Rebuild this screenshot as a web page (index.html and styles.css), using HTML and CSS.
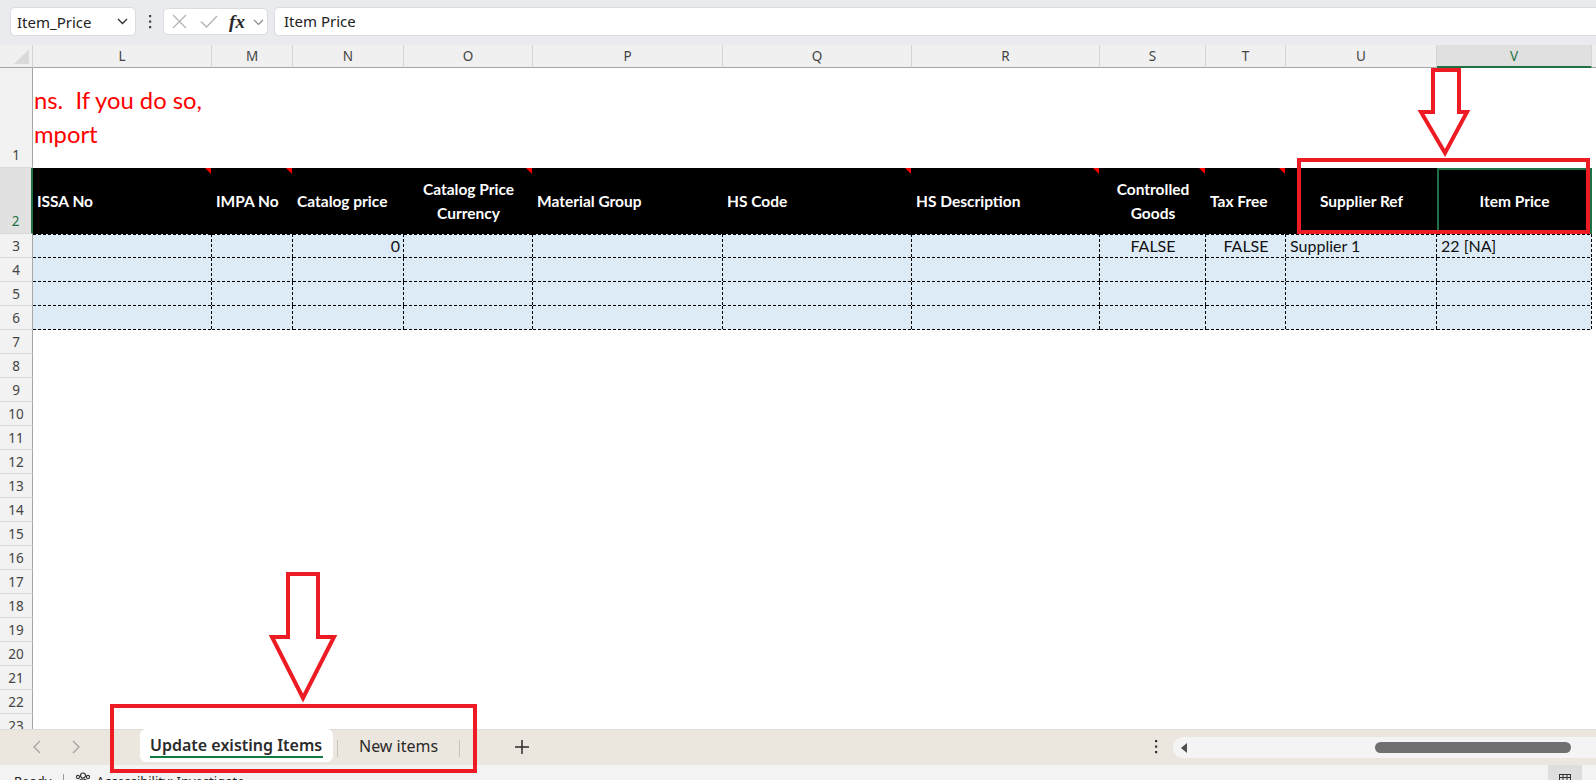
FILE: index.html
```html
<!DOCTYPE html>
<html lang="en">

<head>
  <meta charset="UTF-8" />
  <meta name="viewport" content="width=device-width, initial-scale=1.0" />
  <title>Item import - Update existing Items</title>
  <link rel="stylesheet" href="styles.css">
</head>

<body>
  <div class="formula-bar">
    <div class="name-box">
      <span>Item_Price</span>
      <svg width="11" height="7" viewBox="0 0 11 7"><polyline points="1,1 5.5,5.5 10,1" fill="none" stroke="#303030" stroke-width="1.3" /></svg>
    </div>
    <div class="bar-dots">
      <svg width="4" height="14" viewBox="0 0 4 14"><rect x="1" y="0" width="2.2" height="2.2" /><rect x="1" y="5.5" width="2.2" height="2.2" /><rect x="1" y="11" width="2.2" height="2.2" /></svg>
    </div>
    <div class="fx-group">
      <span class="fx-btn">
        <svg width="15" height="15" viewBox="0 0 15 15"><path d="M1 1L14 14M14 1L1 14" stroke="#b4b4b4" stroke-width="1.3" /></svg>
      </span>
      <span class="fx-btn">
        <svg width="18" height="13" viewBox="0 0 18 13"><polyline points="1,6.5 6.5,12 17,1" fill="none" stroke="#b4b4b4" stroke-width="1.3" /></svg>
      </span>
      <span class="fx-label">fx</span>
      <span class="fx-caret">
        <svg width="11" height="7" viewBox="0 0 11 7"><polyline points="1,1 5.5,5.5 10,1" fill="none" stroke="#8a8a8a" stroke-width="1.2" /></svg>
      </span>
    </div>
    <div class="formula-input">Item Price</div>
  </div>

  <div class="sheet">
    <!-- column letters -->
    <div class="corner"></div>
    <div class="col-head">L</div>
    <div class="col-head">M</div>
    <div class="col-head">N</div>
    <div class="col-head">O</div>
    <div class="col-head">P</div>
    <div class="col-head">Q</div>
    <div class="col-head">R</div>
    <div class="col-head">S</div>
    <div class="col-head">T</div>
    <div class="col-head">U</div>
    <div class="col-head selected">V</div>
    <div class="col-head rest"></div>

    <!-- row 1: instructions (overflowing from earlier columns) -->
    <div class="row-head tall">1</div>
    <div class="wide-cell">
      <div class="warning">ns.  If you do so,<br>mport</div>
    </div>

    <!-- row 2: column titles -->
    <div class="row-head active">2</div>
    <div class="hcell noted">ISSA No</div>
    <div class="hcell noted">IMPA No</div>
    <div class="hcell">Catalog price</div>
    <div class="hcell centered noted">Catalog Price<br>Currency</div>
    <div class="hcell">Material Group</div>
    <div class="hcell noted">HS Code</div>
    <div class="hcell noted">HS Description</div>
    <div class="hcell centered noted">Controlled<br>Goods</div>
    <div class="hcell noted">Tax Free</div>
    <div class="hcell centered">Supplier Ref</div>
    <div class="hcell centered current">Item Price</div>
    <div class="blank"></div>

    <!-- rows 3-6: data -->
    <div class="row-head">3</div>
    <div class="dcell first"></div>
    <div class="dcell first"></div>
    <div class="dcell first right">0</div>
    <div class="dcell first"></div>
    <div class="dcell first"></div>
    <div class="dcell first"></div>
    <div class="dcell first"></div>
    <div class="dcell first centered">FALSE</div>
    <div class="dcell first centered">FALSE</div>
    <div class="dcell first">Supplier 1</div>
    <div class="dcell first">22 [NA]</div>
    <div class="blank"></div>

    <div class="row-head">4</div>
    <div class="dcell"></div>
    <div class="dcell"></div>
    <div class="dcell"></div>
    <div class="dcell"></div>
    <div class="dcell"></div>
    <div class="dcell"></div>
    <div class="dcell"></div>
    <div class="dcell"></div>
    <div class="dcell"></div>
    <div class="dcell"></div>
    <div class="dcell"></div>
    <div class="blank"></div>

    <div class="row-head">5</div>
    <div class="dcell"></div>
    <div class="dcell"></div>
    <div class="dcell"></div>
    <div class="dcell"></div>
    <div class="dcell"></div>
    <div class="dcell"></div>
    <div class="dcell"></div>
    <div class="dcell"></div>
    <div class="dcell"></div>
    <div class="dcell"></div>
    <div class="dcell"></div>
    <div class="blank"></div>

    <div class="row-head">6</div>
    <div class="dcell"></div>
    <div class="dcell"></div>
    <div class="dcell"></div>
    <div class="dcell"></div>
    <div class="dcell"></div>
    <div class="dcell"></div>
    <div class="dcell"></div>
    <div class="dcell"></div>
    <div class="dcell"></div>
    <div class="dcell"></div>
    <div class="dcell"></div>
    <div class="blank"></div>

    <!-- empty rows -->
    <div class="row-head">7</div><div class="wide-cell"></div>
    <div class="row-head">8</div><div class="wide-cell"></div>
    <div class="row-head">9</div><div class="wide-cell"></div>
    <div class="row-head">10</div><div class="wide-cell"></div>
    <div class="row-head">11</div><div class="wide-cell"></div>
    <div class="row-head">12</div><div class="wide-cell"></div>
    <div class="row-head">13</div><div class="wide-cell"></div>
    <div class="row-head">14</div><div class="wide-cell"></div>
    <div class="row-head">15</div><div class="wide-cell"></div>
    <div class="row-head">16</div><div class="wide-cell"></div>
    <div class="row-head">17</div><div class="wide-cell"></div>
    <div class="row-head">18</div><div class="wide-cell"></div>
    <div class="row-head">19</div><div class="wide-cell"></div>
    <div class="row-head">20</div><div class="wide-cell"></div>
    <div class="row-head">21</div><div class="wide-cell"></div>
    <div class="row-head">22</div><div class="wide-cell"></div>
    <div class="row-head">23</div><div class="wide-cell"></div>
  </div>

  <div class="tab-bar">
    <div class="tab-nav">
      <span class="nav-btn">
        <svg width="8" height="14" viewBox="0 0 8 14"><polyline points="7,1 1,7 7,13" fill="none" stroke="#a3a3a3" stroke-width="1.3" /></svg>
      </span>
      <span class="nav-btn">
        <svg width="8" height="14" viewBox="0 0 8 14"><polyline points="1,1 7,7 1,13" fill="none" stroke="#a3a3a3" stroke-width="1.3" /></svg>
      </span>
    </div>
    <div class="tabs">
      <div class="tab active">Update existing Items</div>
      <span class="tab-sep"></span>
      <div class="tab">New items</div>
      <span class="tab-sep"></span>
    </div>
    <div class="tab-add">
      <svg width="16" height="16" viewBox="0 0 16 16"><path d="M8 1V15M1 8H15" stroke="#2b2b2b" stroke-width="1.5" /></svg>
    </div>
    <div class="tab-dots">
      <svg width="4" height="14" viewBox="0 0 4 14"><rect x="1" y="0" width="2.2" height="2.2" /><rect x="1" y="5.5" width="2.2" height="2.2" /><rect x="1" y="11" width="2.2" height="2.2" /></svg>
    </div>
    <div class="hscroll">
      <svg width="7" height="10" viewBox="0 0 7 10"><polygon points="6,0 6,10 0,5" fill="#505050" /></svg>
      <div class="thumb"></div>
    </div>
  </div>

  <div class="status-bar">
    <span class="status-text">Ready</span>
    <span class="status-sep"></span>
    <span class="status-item">
      <svg width="16" height="14" viewBox="0 0 16 14"><circle cx="8" cy="3.5" r="2.5" fill="none" stroke="#333" stroke-width="1.2" /><circle cx="3" cy="5" r="1.6" fill="none" stroke="#333" stroke-width="1.1" /><circle cx="13" cy="5" r="1.6" fill="none" stroke="#333" stroke-width="1.1" /><path d="M3 13C3 9 5 7 8 7S13 9 13 13" fill="none" stroke="#333" stroke-width="1.2" /></svg>
      Accessibility: Investigate
    </span>
    <span class="view-btn">
      <svg width="12" height="10" viewBox="0 0 12 10"><rect x="0.5" y="0.5" width="11" height="9" fill="none" stroke="#333" /><path d="M4 0V10M8 0V10M0 3.5H12" stroke="#333" /></svg>
    </span>
  </div>

  <!-- red markup drawn on top of the screenshot -->
  <svg class="marks" width="1596" height="780" viewBox="0 0 1596 780">
    <g fill="none" stroke="#ed1c24" stroke-width="4">
      <rect x="1299" y="160" width="289" height="72" />
      <path d="M1433 70H1459V112H1467L1445 153L1421 112H1433Z" />
      <rect x="112" y="706" width="363" height="65" />
      <path d="M288 574H318V637H334L303 698L272 637H288Z" />
    </g>
  </svg>
</body>

</html>
```

FILE: styles.css
```css
* {
  box-sizing: border-box;
}

html,
body {
  margin: 0;
  height: 100%;
}

body {
  position: relative;
  width: 1596px;
  height: 780px;
  overflow: hidden;
  background: #fff;
  color: #242424;
  font-family: "Noto Sans", "Open Sans", sans-serif;
}

/* ---------- formula bar ---------- */

.formula-bar {
  display: flex;
  align-items: flex-start;
  height: 45px;
  padding: 7px 0 0 10px;
  background: #e9ebee;
}

.name-box {
  display: flex;
  align-items: center;
  justify-content: space-between;
  width: 126px;
  height: 29px;
  padding: 0 7px 0 6px;
  background: #fff;
  border: 1px solid #dadcdf;
  border-radius: 5px;
  font-size: 15px;
  color: #222;
}

.bar-dots {
  display: flex;
  justify-content: center;
  align-items: center;
  width: 27px;
  height: 29px;
  fill: #444;
}

.fx-group {
  display: flex;
  align-items: center;
  width: 105px;
  height: 27px;
  margin-top: 1px;
  background: #fff;
  border: 1px solid #dadcdf;
  border-radius: 5px;
}

.fx-btn {
  display: flex;
  justify-content: center;
  width: 30px;
}

.fx-label {
  width: 26px;
  text-align: center;
  font-family: "Liberation Serif", "DejaVu Serif", serif;
  font-style: italic;
  font-weight: bold;
  font-size: 19px;
  line-height: 20px;
  color: #2a2a2a;
}

.fx-caret {
  display: flex;
  justify-content: center;
  width: 16px;
  margin-top: 2px;
}

.formula-input {
  flex: 1;
  height: 29px;
  margin: 0 -10px 0 6px;
  padding-left: 9px;
  background: #fff;
  border: 1px solid #dadcdf;
  border-radius: 5px;
  font-size: 15px;
  line-height: 27px;
  color: #222;
}

/* ---------- grid ---------- */

.sheet {
  display: grid;
  grid-template-columns: 33px 179px 81px 111px 129px 190px 189px 188px 106px 80px 151px 155px 1fr;
  grid-template-rows: 23px 100px 66px repeat(21, 24px);
  height: 684px;
  overflow: hidden;
}

.corner {
  position: relative;
  background: #f0f0f0;
  border-right: 1px solid #d4d4d4;
  border-bottom: 1px solid #a6a6a6;
}

.corner::after {
  content: "";
  position: absolute;
  right: 3px;
  bottom: 3px;
  border-bottom: 15px solid #dadada;
  border-left: 15px solid transparent;
}

.col-head {
  display: flex;
  align-items: center;
  justify-content: center;
  background: #f0f0f0;
  border-right: 1px solid #d4d4d4;
  border-bottom: 1px solid #a6a6a6;
  font-size: 13.5px;
  color: #444;
}

.col-head.selected {
  background: #e0e0e0;
  border-bottom: 2px solid #1e7145;
  color: #1e7145;
}

.col-head.rest {
  border-right: none;
}

.row-head {
  display: flex;
  align-items: flex-end;
  justify-content: center;
  background: #f2f2f2;
  border-right: 1px solid #a6a6a6;
  border-bottom: 1px solid #d9d9d9;
  font-size: 13.5px;
  line-height: 22px;
  color: #444;
}

.row-head.tall {
  padding-bottom: 1px;
}

.row-head.active {
  background: #e1e1e1;
  border-right: 2px solid #1e7145;
  color: #1e7145;
  padding-bottom: 1px;
}

.wide-cell {
  grid-column: 2 / -1;
}

.warning {
  padding: 15px 0 0 1px;
  white-space: pre;
  font-family: Lato, "Liberation Sans", sans-serif;
  font-size: 23.8px;
  line-height: 34px;
  color: #ff0000;
}

/* header row */

.hcell {
  position: relative;
  display: flex;
  align-items: center;
  padding: 0 4px;
  background: #000;
  color: #fff;
  font-family: Lato, "Liberation Sans", sans-serif;
  font-weight: bold;
  font-size: 15.5px;
  line-height: 24px;
  white-space: nowrap;
}

.hcell.centered {
  justify-content: center;
  text-align: center;
}

.hcell.noted::after {
  content: "";
  position: absolute;
  top: 0;
  right: 1px;
  border-top: 6px solid #ff0000;
  border-left: 6px solid transparent;
}

.hcell.current {
  box-shadow: inset 0 0 0 2px #1e7145;
}

/* data rows */

.dcell {
  display: flex;
  align-items: flex-end;
  padding: 0 4px 1px;
  background-color: #ddebf7;
  background-image:
    repeating-linear-gradient(to right, #000 0 3px, transparent 3px 5px),
    repeating-linear-gradient(to bottom, #000 0 3px, transparent 3px 5px);
  background-size: 100% 1px, 1px 100%;
  background-position: left bottom, right top;
  background-repeat: no-repeat;
  font-family: Lato, "Liberation Sans", sans-serif;
  font-size: 16px;
  line-height: 22px;
  color: #111;
  white-space: nowrap;
}

.dcell.first {
  background-image:
    repeating-linear-gradient(to right, #000 0 3px, transparent 3px 5px),
    repeating-linear-gradient(to bottom, #000 0 3px, transparent 3px 5px),
    repeating-linear-gradient(to right, #000 0 3px, transparent 3px 5px);
  background-size: 100% 1px, 1px 100%, 100% 1px;
  background-position: left bottom, right top, left top;
}

.dcell.right {
  justify-content: flex-end;
}

.dcell.centered {
  justify-content: center;
}

/* ---------- sheet tabs ---------- */

.tab-bar {
  display: flex;
  align-items: flex-start;
  height: 36px;
  background: #ebe7de;
  border-top: 1px solid #dcdcdc;
}

.tab-nav {
  display: flex;
  margin: 0 0 0 17px;
}

.nav-btn {
  display: flex;
  justify-content: center;
  align-items: center;
  width: 39px;
  height: 34px;
}

.tabs {
  display: flex;
  align-items: flex-start;
  margin-left: 45px;
}

.tab {
  position: relative;
  height: 33px;
  padding: 0 17px;
  font-size: 16px;
  line-height: 33px;
  color: #2b2b2b;
}

.tab.active {
  width: 193px;
  margin-top: -1px;
  padding: 0 10px;
  background: #fff;
  border-radius: 6px;
  font-weight: 600;
  line-height: 32px;
}

.tab.active::after {
  content: "";
  position: absolute;
  left: 10px;
  right: 10px;
  bottom: 4px;
  height: 2px;
  background: #107c41;
}

.tab-sep {
  width: 1px;
  height: 17px;
  margin: 10px 4px 0;
  background: #c8c4bb;
}

.tab-add {
  display: flex;
  justify-content: center;
  align-items: center;
  width: 40px;
  height: 34px;
  margin-left: 38px;
}

.tab-dots {
  display: flex;
  justify-content: center;
  align-items: center;
  width: 20px;
  height: 34px;
  margin-left: 604px;
  fill: #333;
}

.hscroll {
  display: flex;
  align-items: center;
  flex: 1;
  height: 21px;
  margin: 7px -10px 0 7px;
  padding-left: 8px;
  background: #f4f4f4;
  border-radius: 10px;
}

.thumb {
  width: 196px;
  height: 11px;
  margin-left: 187px;
  background: #707070;
  border-radius: 6px;
}

/* ---------- status bar ---------- */

.status-bar {
  display: flex;
  align-items: flex-start;
  height: 15px;
  padding: 7px 0 0 14px;
  background: #f3f3f3;
  font-size: 13px;
  line-height: 18px;
  color: #222;
  overflow: hidden;
}

.status-sep {
  width: 1px;
  height: 14px;
  margin: 2px 11px 0 12px;
  background: #999;
}

.status-item {
  display: flex;
  gap: 5px;
}

.view-btn {
  display: flex;
  justify-content: center;
  width: 34px;
  height: 20px;
  margin: -7px 14px 0 auto;
  padding-top: 9px;
  background: #dedede;
}

/* ---------- annotation marks ---------- */

.marks {
  position: absolute;
  top: 0;
  left: 0;
  pointer-events: none;
}
```
